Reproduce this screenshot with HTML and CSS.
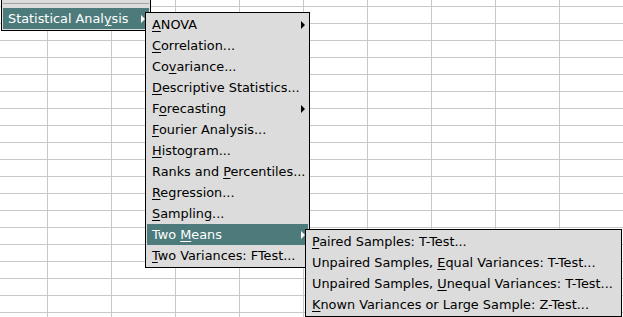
FILE: index.html
```html
<!DOCTYPE html>
<html lang="en">
<head>
    <meta charset="UTF-8">
    <title>Statistical Analysis menu</title>
    <link rel="stylesheet" href="styles.css">
</head>
<body>

    <div class="sheet">

        <!-- Data menu (only its bottom shows) -->
        <div class="menu menu-parent">
            <div class="separator"></div>
            <div class="item active">
                <span class="label">Statistical Anal<u>y</u>sis</span>
                <span class="arrow"></span>
            </div>
        </div>

        <!-- Statistical Analysis submenu -->
        <div class="menu menu-stats">
            <div class="item"><span class="label"><u>A</u>NOVA</span><span class="arrow"></span></div>
            <div class="item"><span class="label"><u>C</u>orrelation...</span></div>
            <div class="item"><span class="label">Co<u>v</u>ariance...</span></div>
            <div class="item"><span class="label"><u>D</u>escriptive Statistics...</span></div>
            <div class="item"><span class="label">F<u>o</u>recasting</span><span class="arrow"></span></div>
            <div class="item"><span class="label"><u>F</u>ourier Analysis...</span></div>
            <div class="item"><span class="label"><u>H</u>istogram...</span></div>
            <div class="item"><span class="label">Ranks and <u>P</u>ercentiles...</span></div>
            <div class="item"><span class="label"><u>R</u>egression...</span></div>
            <div class="item"><span class="label"><u>S</u>ampling...</span></div>
            <div class="item active"><span class="label">Two <u>M</u>eans</span><span class="arrow"></span></div>
            <div class="item"><span class="label"><u>T</u>wo Variances: FTest...</span></div>
        </div>

        <!-- Two Means submenu -->
        <div class="menu menu-means">
            <div class="item"><span class="label"><u>P</u>aired Samples: T-Test...</span></div>
            <div class="item"><span class="label">Unpaired Samples, <u>E</u>qual Variances: T-Test...</span></div>
            <div class="item"><span class="label">Unpaired Samples, <u>U</u>nequal Variances: T-Test...</span></div>
            <div class="item"><span class="label"><u>K</u>nown Variances or Large Sample: Z-Test...</span></div>
        </div>

    </div>

</body>
</html>
```

FILE: styles.css
```css
body {
    margin: 0;
    font-family: "DejaVu Sans", "Noto Sans", sans-serif;
    font-size: 12.85px;
    color: #000;
}

/* spreadsheet grid behind the menus */
.sheet {
    position: relative;
    width: 623px;
    height: 317px;
    overflow: hidden;
    background-color: #fff;
    background-image:
        linear-gradient(to right, #c8c8c8 1px, transparent 1px),
        linear-gradient(to bottom, #c8c8c8 1px, transparent 1px);
    background-size: 64px 17px;
    background-position: 47px 6px;
}

.menu {
    position: absolute;
    box-sizing: border-box;
    background: #dcdcdc;
    border: 1px solid #000;
    padding: 1px;
}

.menu-parent {
    left: 1px;
    top: -6px;
    width: 150px;
}

.menu-stats {
    left: 145px;
    top: 12px;
    width: 165px;
}

.menu-means {
    left: 305px;
    top: 229px;
    width: 317px;
}

.separator {
    height: 12px;
    padding-top: 7px;
    box-sizing: border-box;
}

.separator::before {
    content: "";
    display: block;
    height: 1px;
    background: #a2a2a2;
}

.item {
    display: flex;
    align-items: center;
    height: 21px;
    padding: 0 3px 0 5px;
    white-space: nowrap;
}

.item .label {
    flex: 1;
}

.item u {
    text-underline-offset: 2px;
}

.item.active {
    background: #4d7b7b;
    color: #fff;
}

.arrow {
    width: 0;
    height: 0;
    border-top: 4px solid transparent;
    border-bottom: 4px solid transparent;
    border-left: 4px solid currentColor;
}

.menu-parent .arrow {
    margin-right: 1px;
}
```
